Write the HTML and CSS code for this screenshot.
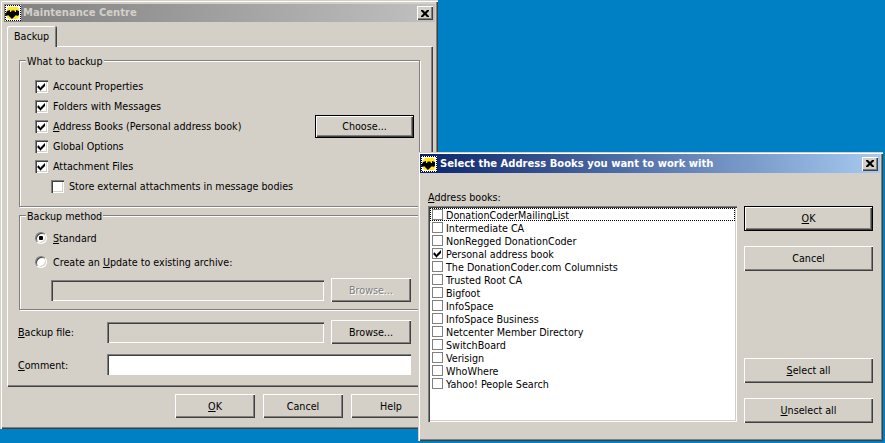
FILE: index.html
```html
<!DOCTYPE html>
<html lang="en">
<head>
<meta charset="utf-8">
<title>Maintenance Centre</title>
<link rel="stylesheet" href="styles.css">
</head>
<body>
<svg class="defs" width="0" height="0" aria-hidden="true">
  <defs>
    <pattern id="chk" width="2" height="2" patternUnits="userSpaceOnUse">
      <rect width="2" height="2" fill="#fff"/>
      <rect width="1" height="1" fill="#000"/>
      <rect x="1" y="1" width="1" height="1" fill="#000"/>
    </pattern>
    <symbol id="bat" viewBox="0 0 16 16">
      <rect width="16" height="16" fill="url(#chk)"/>
      <rect x="1" y="1" width="14" height="14" fill="#fff"/>
      <rect x="2" y="2" width="12" height="12" rx="3" fill="#ffe81a"/>
      <path d="M2 6l3-1v2h1l1-2 1 1 1-1 1 2h1V5l3 1v4l-2 1-1-1-1 1-1 1-2 2-2-2-1-1-1-1-1 1-2-1z" fill="#000"/>
    </symbol>
    <symbol id="tick" viewBox="0 0 9 9">
      <path d="M1 3.500h1v1h1v1h1v-1h1v-1h1v-1h1v-1h1v3h-1v1h-1v1h-1v1h-1v1h-1v-1h-1v-1h-1v-1h-1z" fill="#000"/>
    </symbol>
    <symbol id="x" viewBox="0 0 8 7">
      <path d="M0 0h2l2 2 2-2h2v1l-2.500 2.500 2.500 2.500v1h-2l-2-2-2 2h-2v-1l2.500-2.500-2.500-2.500z" fill="#000"/>
    </symbol>
  </defs>
</svg>

<section class="win win-main">
  <header class="title title-off">
    <svg class="app-icon"><use href="#bat"/></svg>
    <span class="title-text">Maintenance Centre</span>
    <span class="close"><svg class="x"><use href="#x"/></svg></span>
  </header>
  <div class="tabs"><span class="tab">Backup</span></div>
  <div class="page">
    <fieldset class="group group-what">
      <legend>What to backup</legend>
      <div class="row"><span class="cb"><svg class="tick"><use href="#tick"/></svg></span><span>Account Properties</span></div>
      <div class="row"><span class="cb"><svg class="tick"><use href="#tick"/></svg></span><span>Folders with Messages</span></div>
      <div class="row row-choose"><span class="cb"><svg class="tick"><use href="#tick"/></svg></span><span><u>A</u>ddress Books (Personal address book)</span><span class="btn btn-default btn-choose">Choose...</span></div>
      <div class="row"><span class="cb"><svg class="tick"><use href="#tick"/></svg></span><span>Global Options</span></div>
      <div class="row"><span class="cb"><svg class="tick"><use href="#tick"/></svg></span><span>Attachment Files</span></div>
      <div class="row row-sub"><span class="cb"></span><span>Store external attachments in message bodies</span></div>
    </fieldset>
    <fieldset class="group group-method">
      <legend>Backup method</legend>
      <div class="row row-radio"><span class="radio radio-on"></span><span><u>S</u>tandard</span></div>
      <div class="row row-radio"><span class="radio"></span><span>Create an <u>U</u>pdate to existing archive:</span></div>
      <div class="field-row">
        <span class="input input-update"></span>
        <span class="btn btn-browse btn-disabled">Browse...</span>
      </div>
    </fieldset>
    <div class="form-row form-file">
      <span class="form-label"><u>B</u>ackup file:</span>
      <span class="input input-file"></span>
      <span class="btn btn-browse">Browse...</span>
    </div>
    <div class="form-row form-comment">
      <span class="form-label"><u>C</u>omment:</span>
      <span class="input input-comment"></span>
    </div>
  </div>
  <footer class="actions">
    <span class="btn btn-action"><u>O</u>K</span>
    <span class="btn btn-action">Cancel</span>
    <span class="btn btn-action">Help</span>
  </footer>
</section>

<section class="win win-books">
  <header class="title title-on">
    <svg class="app-icon"><use href="#bat"/></svg>
    <span class="title-text">Select the Address Books you want to work with</span>
    <span class="close"><svg class="x"><use href="#x"/></svg></span>
  </header>
  <div class="books-body">
    <div class="books-left">
      <div class="books-label"><u>A</u>ddress books:</div>
      <ul class="list">
        <li class="item item-focus"><span class="lcb"></span>DonationCoderMailingList</li>
        <li class="item"><span class="lcb"></span>Intermediate CA</li>
        <li class="item"><span class="lcb"></span>NonRegged DonationCoder</li>
        <li class="item"><span class="lcb"><svg class="tick"><use href="#tick"/></svg></span>Personal address book</li>
        <li class="item"><span class="lcb"></span>The DonationCoder.com Columnists</li>
        <li class="item"><span class="lcb"></span>Trusted Root CA</li>
        <li class="item"><span class="lcb"></span>Bigfoot</li>
        <li class="item"><span class="lcb"></span>InfoSpace</li>
        <li class="item"><span class="lcb"></span>InfoSpace Business</li>
        <li class="item"><span class="lcb"></span>Netcenter Member Directory</li>
        <li class="item"><span class="lcb"></span>SwitchBoard</li>
        <li class="item"><span class="lcb"></span>Verisign</li>
        <li class="item"><span class="lcb"></span>WhoWhere</li>
        <li class="item"><span class="lcb"></span>Yahoo! People Search</li>
      </ul>
    </div>
    <div class="books-right">
      <span class="btn btn-default btn-side"><u>O</u>K</span>
      <span class="btn btn-side btn-cancel">Cancel</span>
      <span class="btn btn-side btn-select"><u>S</u>elect all</span>
      <span class="btn btn-side btn-unselect"><u>U</u>nselect all</span>
    </div>
  </div>
</section>
</body>
</html>
```

FILE: styles.css
```css
* { box-sizing: border-box; }
html, body { margin: 0; height: 100%; }
body {
  position: relative;
  overflow: hidden;
  background: #0080c4;
  font: 10.67px/13px "DejaVu Sans Condensed", "DejaVu Sans", sans-serif;
  font-stretch: condensed;
  color: #000;
}
u { text-decoration: underline; text-underline-offset: 1px; }
.defs { position: absolute; }

.win {
  position: absolute;
  background: #d4d0c8;
  padding: 4px;
  box-shadow:
    inset 1px 1px 0 #d4d0c8,
    inset 2px 2px 0 #fff,
    inset -1px -1px 0 #404040,
    inset -2px -2px 0 #808080;
}
.win-main { left: 0; top: 0; width: 438px; height: 429px; }
.win-books { left: 418px; top: 152px; width: 465px; height: 289px; padding: 2px; }

.title {
  display: flex;
  align-items: center;
  height: 19px;
  padding: 0 2px 0 1px;
  color: #fff;
  font: bold 10px/18px "DejaVu Sans", Verdana, sans-serif;
  font-stretch: normal;
}
.title-off { height: 18px; margin-right: -1px; background: linear-gradient(90deg, #808080, #c0c0c0); color: #d4d0c8; }
.title-on { margin-right: 1px; background: linear-gradient(90deg, #0a246a, #a6caf0); }
.app-icon { width: 16px; height: 16px; margin-right: 2px; flex: none; }
.title-on .app-icon { margin-right: 3px; }
.title-text { flex: 1; white-space: nowrap; }
.close {
  display: flex;
  align-items: center;
  justify-content: center;
  width: 16px;
  height: 14px;
  background: #d4d0c8;
  box-shadow:
    inset 1px 1px 0 #fff,
    inset -1px -1px 0 #404040,
    inset -2px -2px 0 #808080;
}
.x { width: 8px; height: 7px; }

.tabs { display: flex; padding: 4px 0 0 3px; height: 24px; }
.tab {
  position: relative;
  z-index: 1;
  width: 49px;
  height: 21px;
  padding-top: 4px;
  text-align: center;
  background: #d4d0c8;
  border-radius: 2px 2px 0 0;
  box-shadow:
    inset 1px 1px 0 #fff,
    inset -1px 0 0 #808080,
    1px 0 0 #404040;
}
.page {
  width: 425px;
  height: 340px;
  margin-left: 3px;
  padding: 8px 0 0 12px;
  box-shadow:
    inset 1px 1px 0 #fff,
    inset -1px -1px 0 #808080,
    1px 1px 0 #404040;
}

.group {
  display: block;
  margin: 0;
  padding: 0;
  width: 401px;
  border: 1px solid #808080;
  box-shadow: inset 1px 1px 0 #fff, 1px 1px 0 #fff;
  min-inline-size: 0;
}
.group legend {
  margin-left: 6px;
  padding: 1px 1px 0;
  height: 13px;
  background: #d4d0c8;
}
.group-what { height: 153px; }
.group-method { height: 101px; margin-top: 2px; }
.group-what legend { margin-bottom: 9px; }
.group-method legend { margin-bottom: 4px; }

.row { display: flex; align-items: center; height: 20px; margin-left: 15px; }
.row-sub { padding-left: 16px; }
.row-radio { height: 24px; }
.row-choose { position: relative; }

.cb {
  display: flex;
  align-items: center;
  justify-content: center;
  flex: none;
  width: 13px;
  height: 13px;
  margin-right: 5px;
  background: #fff;
  box-shadow:
    inset 1px 1px 0 #808080,
    inset 2px 2px 0 #404040,
    inset -1px -1px 0 #fff,
    inset -2px -2px 0 #d4d0c8;
}
.tick { width: 9px; height: 9px; }
.radio {
  flex: none;
  width: 12px;
  height: 12px;
  margin-right: 6px;
  border-radius: 50%;
  background: #fff;
  border: 1px solid #808080;
  border-right-color: #fff;
  border-bottom-color: #fff;
  box-shadow: inset 1px 1px 0 #404040, inset -1px -1px 0 #d4d0c8;
}
.radio-on { background: radial-gradient(circle, #000 0 2px, #fff 2.500px); }

.btn {
  display: flex;
  align-items: center;
  justify-content: center;
  flex: none;
  background: #d4d0c8;
  box-shadow:
    inset 1px 1px 0 #fff,
    inset -1px -1px 0 #404040,
    inset -2px -2px 0 #808080;
}
.btn-default { border: 1px solid #000; }
.btn-disabled {
  color: #808080;
  text-shadow: 1px 1px 0 #fff;
}
.btn-choose { position: absolute; left: 280px; top: -1px; width: 99px; height: 23px; }
.btn-browse { width: 80px; height: 24px; }
.btn-action { width: 80px; height: 24px; }

.field-row { display: flex; align-items: center; gap: 7px; padding-left: 31px; margin-top: 4px; }
.input {
  display: block;
  height: 21px;
  background: #d4d0c8;
  box-shadow:
    inset 1px 1px 0 #808080,
    inset 0 2px 0 #404040,
    inset 2px 0 0 #404040,
    inset -1px -1px 0 #fff;
}
.input-update { width: 273px; }
.input-file { width: 217px; }
.input-comment { width: 304px; background: #fff; }

.form-row { display: flex; align-items: center; }
.form-label { width: 89px; flex: none; margin-left: -1px; padding-top: 1px; }
.form-file { margin-top: 10px; gap: 7px; }
.form-file .form-label { margin-right: -7px; }
.form-comment { margin-top: 10px; }

.actions { display: flex; gap: 8px; padding: 8px 0 0 171px; }

.books-body { display: flex; padding: 0 0 0 8px; }
.books-left { width: 316px; flex: none; }
.books-label { height: 13px; margin: 18px 0 2px; }
.list {
  list-style: none;
  margin: 0;
  width: 309px;
  height: 216px;
  padding: 2px;
  background: #fff;
  box-shadow:
    inset 1px 1px 0 #808080,
    inset 2px 2px 0 #404040,
    inset -1px -1px 0 #fff,
    inset -2px -2px 0 #d4d0c8;
}
.item { display: flex; align-items: center; height: 13px; padding: 1px 0 0 2px; white-space: nowrap; }
.item-focus { outline: 1px dotted #000; outline-offset: -1px; }
.lcb {
  display: flex;
  align-items: center;
  justify-content: center;
  flex: none;
  width: 11px;
  height: 11px;
  margin: -1px 3px 0 0;
  border: 1px solid #808080;
  background: #fff;
}
.lcb .tick { width: 9px; height: 9px; }

.books-right { display: flex; flex-direction: column; padding-top: 33px; width: 129px; }
.btn-side { width: 129px; height: 25px; }
.btn-cancel { margin-top: 15px; }
.btn-select { margin-top: 87px; }
.btn-unselect { margin-top: 15px; }
```
